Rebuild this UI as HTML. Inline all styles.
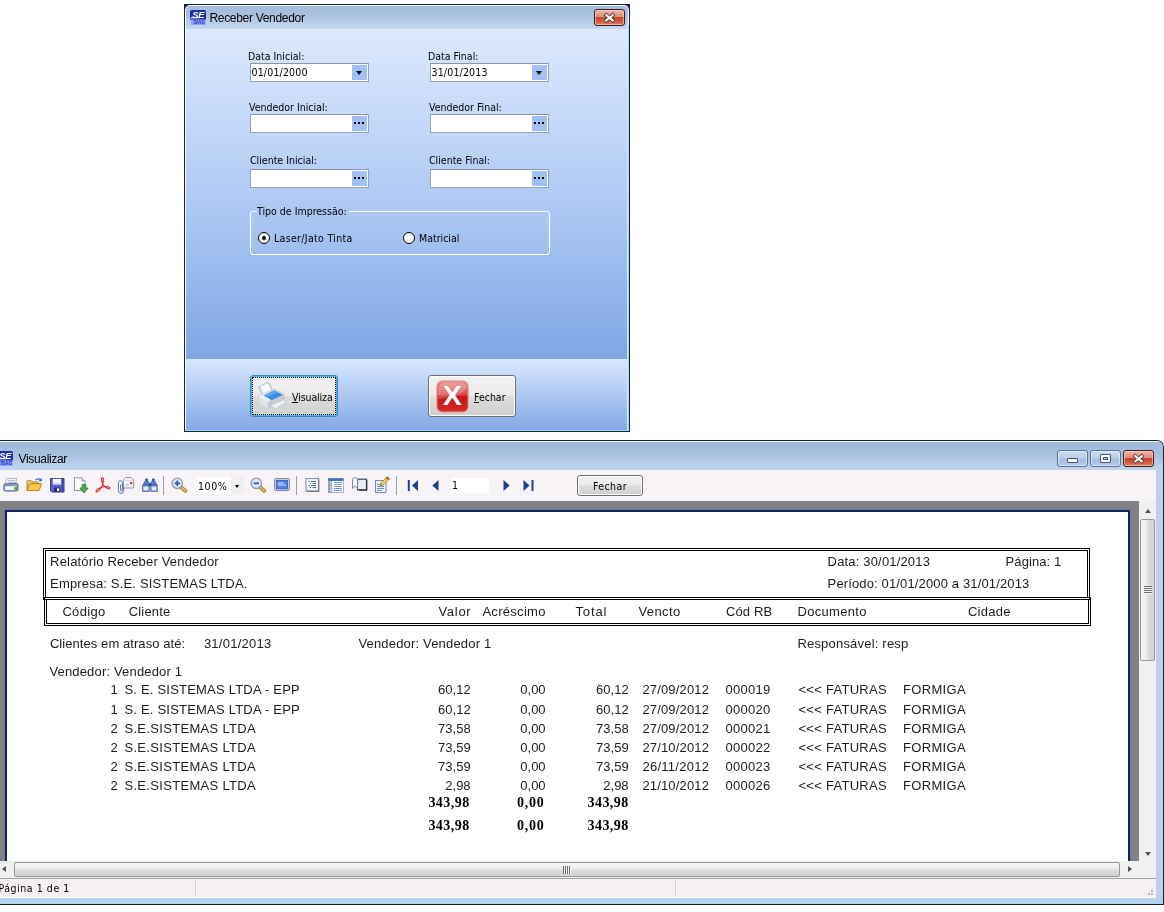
<!DOCTYPE html>
<html lang="pt-BR">
<head>
<meta charset="utf-8">
<title>Receber Vendedor</title>
<style>
*{box-sizing:border-box;margin:0;padding:0}
html,body{width:1164px;height:912px;overflow:hidden;background:#fff}
body{position:relative;font-family:"DejaVu Sans Condensed","Liberation Sans",sans-serif;font-size:10.5px;color:#000}
.abs{position:absolute}
.t{position:absolute;white-space:pre;line-height:1}
/* ---------- dialog ---------- */
#dlg{position:absolute;left:184px;top:4px;width:446px;height:428px;background:#19212b}
#dlg .fr{position:absolute;left:1px;top:1px;width:444px;height:426px;border-radius:5px 5px 0 0;overflow:hidden;background:#f4f9fe}
#dlg .title{position:absolute;left:1px;top:1px;width:442px;height:23px;border-radius:4px 4px 0 0;background:linear-gradient(#a3bcdb 0%,#a9c1df 40%,#b9cfe9 75%,#c4d7ee 100%)}
#dlg .title .cap{left:23.400px;top:6px;font-family:"Liberation Sans",sans-serif;font-size:12px;letter-spacing:-.3px;color:#000}
#dlg .client{position:absolute;left:1px;top:24px;width:441px;height:330px;background:linear-gradient(#dce9fd 0%,#b1cbf5 50%,#80a6e5 100%)}
#dlg .foot{position:absolute;left:1px;top:354px;width:441px;height:71px;background:linear-gradient(#d9e8fd 0%,#84a9e6 100%)}
#dlg .rline{position:absolute;left:442px;top:20px;width:2px;height:406px;background:linear-gradient(90deg,#cfe7f8 50%,#9fdbf4 50%)}
#dlg .bline{position:absolute;left:0;top:425px;width:444px;height:1px;background:#9bdcf5}
.lbl{position:absolute;white-space:pre;line-height:13px;height:13px}
.fld{position:absolute;width:119px;height:19px;background:#fff;border:1px solid #98a1b3;border-top-color:#8c95a7}
.fld .btn{position:absolute;right:1px;top:1px;width:15px;height:15px;background:#a1c0f5}
.fld .val{position:absolute;left:.5px;top:2px;line-height:13px;white-space:pre;letter-spacing:.17px}
.dots i{position:absolute;top:6px;width:2px;height:2px;background:#000}
.arrow{position:absolute;left:4px;top:6px;width:0;height:0;border-left:3.500px solid transparent;border-right:3.500px solid transparent;border-top:4px solid #000}
.radio{position:absolute;width:12px;height:12px;border-radius:50%;background:#fff;border:1px solid #000}
.radio.on:after{content:"";position:absolute;left:3px;top:3px;width:4px;height:4px;border-radius:50%;background:#000}
.bbtn{position:absolute;top:371px;width:88px;height:42px;border:1px solid #707070;border-radius:3px;background:linear-gradient(#f2f2f2 0%,#ebebeb 48%,#dddddd 52%,#cfcfcf 100%);box-shadow:inset 0 0 0 1px #fcfcfc}
/* ---------- viewer window ---------- */
#win{position:absolute;left:-8px;top:440px;width:1172px;height:465px;background:#19212b;border-radius:7px 7px 0 0}
#win .fr{position:absolute;left:1px;top:1px;width:1170px;height:463px;border-radius:6px 6px 0 0;overflow:hidden;background:#b9d1ef}
#win .title{position:absolute;left:0;top:0;width:1170px;height:29px;border-top:1px solid #eef5fc;background:linear-gradient(#9fb9d9 0%,#a5bfdd 40%,#b6cdea 75%,#bfd4ef 100%)}
#win .cap{left:25.600px;top:11px;font-family:"Liberation Sans",sans-serif;font-size:12px;letter-spacing:-.35px}
.cbtn{position:absolute;top:8px;width:31px;height:17px;border:1px solid #5b7494;border-radius:3px;background:linear-gradient(#c9daef 0%,#bccfe8 48%,#a5bedf 52%,#b3c9e6 100%);box-shadow:inset 0 0 0 1px rgba(255,255,255,.5)}
#tb{position:absolute;left:7px;top:29px;width:1156px;height:31px;background:#f7f3f7}
#pv{position:absolute;left:7px;top:60px;width:1139px;height:360px;background:#828286}
#page{position:absolute;left:5px;top:9px;width:1125px;height:360px;border:2px solid #14235a;border-bottom:0;background:#fff;box-shadow:0 0 0 1px #6f7d9e}
#vs{position:absolute;left:1146px;top:60px;width:17px;height:360px;background:#f1f0f1}
#hs{position:absolute;left:7px;top:420px;width:1156px;height:18px;background:#f1f0f1}
#sb{position:absolute;left:7px;top:437px;width:1156px;height:20px;background:#f6f0f1;border-top:1px solid #a3a3a6;border-bottom:1px solid #fcfbfd}
.thumb{position:absolute;border:1px solid #979797;border-radius:2px}
#page,#dlg,.lbl,.fld,.bbtn,#tb,#sb,.title{will-change:transform}
.rp{font-family:"Liberation Sans",sans-serif;font-size:13px;color:#1c1c1c}
.rp .t{line-height:15px}
.b{font-family:"Liberation Serif",serif;font-weight:bold;font-size:14px;color:#000}
</style>
</head>
<body>

<!-- ================= Dialog: Receber Vendedor ================= -->
<div id="dlg"><div class="fr">
  <div class="title">
    <svg class="abs" style="left:4px;top:4px" width="16" height="15" viewBox="0 0 16 15"><rect x="0" y="0" width="16" height="10" rx="1.500" fill="#1c2fa3"/><rect x="1" y="9.500" width="14.500" height="5.500" fill="#8fa2f2"/><text x="8.200" y="7.600" font-family="Liberation Sans,sans-serif" font-weight="bold" font-style="italic" font-size="9.500" fill="#fff" text-anchor="middle" letter-spacing="-.5">SE</text><rect x=".5" y="7.300" width="9" height="1" fill="#fff"/><text x="9.300" y="14" font-family="Liberation Sans,sans-serif" font-weight="bold" font-size="4.800" fill="#2333cc" text-anchor="middle">SIAG</text></svg>
    <span class="t cap">Receber Vendedor</span>
    <div class="abs" id="dclose" style="left:408px;top:3px;width:31px;height:17px;border:1px solid #3d1c22;border-radius:3px;background:linear-gradient(#efb3a4 0%,#e08c7b 46%,#c6452b 50%,#cf5a40 75%,#dd8068 100%);box-shadow:inset 0 0 0 1px rgba(255,225,215,.55)">
      <svg class="abs" style="left:8px;top:2px" width="13" height="11" viewBox="0 0 13 11"><path d="M3.300 3.200 L9.700 8.300 M9.700 3.200 L3.300 8.300" stroke="#4a3a3e" stroke-width="3.800" stroke-linecap="square"/><path d="M3.300 3.200 L9.700 8.300 M9.700 3.200 L3.300 8.300" stroke="#fff" stroke-width="2.200" stroke-linecap="square"/></svg>
    </div>
  </div>
  <div class="client"></div>
  <div class="foot"></div>
  <div class="rline"></div>
  <div class="bline"></div>
</div></div>

<!-- dialog controls in page coordinates -->
<span class="lbl" style="left:248px;top:50px">Data Inicial:</span>
<span class="lbl" style="left:428px;top:50px">Data Final:</span>
<div class="fld" style="left:250px;top:63px"><span class="val">01/01/2000</span><div class="btn"><div class="arrow"></div></div></div>
<div class="fld" style="left:430px;top:63px"><span class="val">31/01/2013</span><div class="btn"><div class="arrow"></div></div></div>

<span class="lbl" style="left:249px;top:101px">Vendedor Inicial:</span>
<span class="lbl" style="left:429px;top:101px">Vendedor Final:</span>
<div class="fld" style="left:250px;top:114px"><div class="btn dots"><i style="left:2px"></i><i style="left:6px"></i><i style="left:10px"></i></div></div>
<div class="fld" style="left:430px;top:114px"><div class="btn dots"><i style="left:2px"></i><i style="left:6px"></i><i style="left:10px"></i></div></div>

<span class="lbl" style="left:250px;top:154px">Cliente Inicial:</span>
<span class="lbl" style="left:429px;top:154px">Cliente Final:</span>
<div class="fld" style="left:250px;top:169px"><div class="btn dots"><i style="left:2px"></i><i style="left:6px"></i><i style="left:10px"></i></div></div>
<div class="fld" style="left:430px;top:169px"><div class="btn dots"><i style="left:2px"></i><i style="left:6px"></i><i style="left:10px"></i></div></div>

<div class="abs" style="left:250px;top:211px;width:300px;height:44px;border:1px solid #fff;border-radius:3px;clip-path:polygon(0 0,6.500px 0,6.500px 3px,99px 3px,99px 0,100% 0,100% 100%,0 100%)"></div>
<span class="lbl" id="grplbl" style="left:257px;top:205px">Tipo de Impressão:</span>
<div class="radio on" style="left:258px;top:232px"></div>
<span class="lbl" style="left:274px;top:232px;letter-spacing:.33px">Laser/Jato Tinta</span>
<div class="radio" style="left:403px;top:232px"></div>
<span class="lbl" style="left:419px;top:232px">Matricial</span>

<div class="bbtn" id="bvis" style="left:250px;top:375px;border-color:#3c86b8;box-shadow:inset 0 0 0 1px #46b4e6">
  <div class="abs" style="left:1px;top:1px;right:1px;bottom:1px;border:1px dotted #000"></div>
  <svg class="abs" style="left:5px;top:5px" width="32" height="30" viewBox="0 0 32 30"><path d="M2.500 6.200L12 1l2 2 2.500 7-9.500 4.500z" fill="#d5d9e0" stroke="#a9afba" stroke-width=".6"/><path d="M4 5.600L12.300 2l3.300 7.600-8.800 3.600z" fill="#f8f9fb" stroke="#c3c8d0" stroke-width=".5"/><path d="M2.700 15.500l4.700-3L18 8l10 5 .4 5-16.600 9.400-8.700-4.800z" fill="#f1f3f6" stroke="#b4bac5" stroke-width=".7"/><path d="M2.700 15.500l9.100 5v6.900l-8.700-4.800z" fill="#e2e5ea"/><path d="M11.800 20.500l16.400-7.300.2 4.800-16.600 9.400z" fill="#c6cbd4"/><path d="M7.600 14.400L18 9.200l9 4.600-11.400 5.400z" fill="#3f8de0"/><path d="M7.600 14.400L18 9.200l4 2-11 5.200z" fill="#5aa4ee"/><path d="M14.900 24.200l11.900-5.100 3.900 1.900-11.400 6.800z" fill="#eef0f3" stroke="#b0b6c0" stroke-width=".5"/></svg>
  <span class="lbl" style="left:41px;top:15px;letter-spacing:-.1px"><u>V</u>isualiza</span>
</div>
<div class="bbtn" id="bfec" style="left:428px;top:375px">
  <svg class="abs" style="left:7px;top:4px" width="33" height="33" viewBox="0 0 33 33"><defs><linearGradient id="rg" x1="0" y1="0" x2="0" y2="1"><stop offset="0" stop-color="#e98c8c"/><stop offset=".45" stop-color="#d64545"/><stop offset=".5" stop-color="#c61717"/><stop offset="1" stop-color="#d42a2a"/></linearGradient></defs><rect x=".8" y=".8" width="31.400" height="31.400" rx="5.500" fill="url(#rg)" stroke="#e9a3a3" stroke-width="1.200"/><path d="M2 14C2 6 4 2.500 9 2.500h15c4 0 6 2 6.500 6C24 16 12 18 2 19z" fill="#fff" opacity=".22"/><text x="16.200" y="25.400" font-family="Liberation Sans,sans-serif" font-weight="bold" font-size="28.500" fill="#fff" text-anchor="middle">X</text></svg>
  <span class="lbl" style="left:45px;top:15px"><u>F</u>echar</span>
</div>

<!-- ================= Window: Visualizar ================= -->
<div id="win"><div class="fr">
  <div class="title">
    <svg class="abs" style="left:4px;top:9px" width="16" height="15" viewBox="0 0 16 15"><rect x="0" y="0" width="16" height="10" rx="1.500" fill="#1c2fa3"/><rect x="1" y="9.500" width="14.500" height="5.500" fill="#8fa2f2"/><text x="8.200" y="7.600" font-family="Liberation Sans,sans-serif" font-weight="bold" font-style="italic" font-size="9.500" fill="#fff" text-anchor="middle" letter-spacing="-.5">SE</text><rect x=".5" y="7.300" width="9" height="1" fill="#fff"/><text x="9.300" y="14" font-family="Liberation Sans,sans-serif" font-weight="bold" font-size="4.800" fill="#2333cc" text-anchor="middle">SIAG</text></svg>
    <span class="t cap">Visualizar</span>
    <div class="cbtn" style="left:1064px"><div class="abs" style="left:9px;top:7px;width:11px;height:5px;background:#fff;border:1px solid #4b5669;border-radius:1px"></div></div>
    <div class="cbtn" style="left:1097px"><div class="abs" style="left:9px;top:3px;width:11px;height:9px;background:#fff;border:1px solid #4b5669;border-radius:1px"><div class="abs" style="left:2px;top:2px;width:5px;height:3px;background:#a9bfde;border:1px solid #4b5669"></div></div></div>
    <div class="cbtn" style="left:1130px;border-color:#3d1c22;background:linear-gradient(#efb3a4 0%,#e08c7b 46%,#c6452b 50%,#cf5a40 75%,#dd8068 100%);box-shadow:inset 0 0 0 1px rgba(255,225,215,.55)"><svg class="abs" style="left:8px;top:2px" width="13" height="11" viewBox="0 0 13 11"><path d="M3.300 3.200 L9.700 8.300 M9.700 3.200 L3.300 8.300" stroke="#4a3a3e" stroke-width="3.800" stroke-linecap="square"/><path d="M3.300 3.200 L9.700 8.300 M9.700 3.200 L3.300 8.300" stroke="#fff" stroke-width="2.200" stroke-linecap="square"/></svg></div>
  </div>
  <div id="tb">
    <!-- print -->
    <svg class="abs" style="left:3px;top:7px" width="16" height="16" viewBox="0 0 16 16"><path d="M3.900 1.300L13.800 1.600 12.300 7.200H2.100z" fill="#fafbfd" stroke="#8c97ad" stroke-width=".7"/><path d="M5.200 3.400h7M4.600 5.200h7" stroke="#9aa5ba" stroke-width=".8"/><path d="M.8 8.300C.8 7.400 1.400 7 2.300 6.900L13 6.200c1.200-.1 2 .5 2 1.600v4.700c0 1-.6 1.600-1.600 1.600H2.200c-.9 0-1.400-.5-1.400-1.400z" fill="#8a9fc6" stroke="#3f5580" stroke-width=".8"/><rect x="1.600" y="8.800" width="12.600" height="4.700" rx=".8" fill="#f1f4fb" stroke="#5b7099" stroke-width=".6"/><rect x="11.300" y="10.100" width="2.700" height="2.700" fill="#1fb32a"/></svg>
    <!-- open -->
    <svg class="abs" style="left:26px;top:7px" width="17" height="16" viewBox="0 0 17 16"><path d="M1 13.500V4.500c0-.5.300-.8.800-.8h3.400l1.200 1.300h5.100c.5 0 .8.300.8.800v1.700" fill="#f3d27a" stroke="#a07a1c" stroke-width=".9"/><path d="M1 13.500l2.300-6.300c.1-.4.400-.6.800-.6h10.700c.5 0 .7.300.6.700l-2 5.600c-.1.400-.4.600-.8.600z" fill="#f7c64a" stroke="#a07a1c" stroke-width=".9"/><path d="M9.500 3.200c1.500-1.800 3.800-1.900 5.200-.2" fill="none" stroke="#3b62b8" stroke-width="1.200"/><path d="M15.800.8v3.400h-3.300z" fill="#3b62b8"/></svg>
    <!-- save -->
    <svg class="abs" style="left:50px;top:8px" width="15" height="15" viewBox="0 0 15 15"><path d="M.5.500h13.500v13.500H1.800L.5 12.700z" fill="#5a61c6" stroke="#333a9a" stroke-width="1"/><path d="M12.500 1v12.500" stroke="#3a4098" stroke-width="1.500"/><rect x="2.800" y=".8" width="8.400" height="5.700" fill="#f4f6fd"/><path d="M2.800 5.500h8.400" stroke="#cfd5f2" stroke-width="1.500"/><rect x="4.500" y="9.500" width="5.200" height="4.300" fill="#1e2158"/><rect x="6.900" y="10.300" width="2.200" height="2.800" fill="#eef0fb"/></svg>
    <!-- export -->
    <svg class="abs" style="left:73px;top:7px" width="16" height="17" viewBox="0 0 16 17"><path d="M1.500.800h7.500l3 3v9.700H1.500z" fill="#fbfcfe" stroke="#7f8b9c" stroke-width=".9"/><path d="M9 .8v3h3" fill="#dfe5ee" stroke="#7f8b9c" stroke-width=".8"/><path d="M9.200 7.500h3.600v3.500h2.400l-4.200 5-4.200-5h2.400z" fill="#4fb04a" stroke="#2a7a2a" stroke-width=".8"/></svg>
    <!-- pdf -->
    <svg class="abs" style="left:95px;top:7px" width="16" height="16" viewBox="0 0 16 16"><path d="M1.200 14.600c-.9-1.500 3.400-4.300 7.600-4.900 3.300-.5 6.300.3 6 1.600-.3 1.200-3.600.300-6.200-3.100C6.300 5.200 6 1.300 7.300.9c1.400-.4 1.600 3 .1 7.200-1.700 4.600-5.300 7.900-6.200 6.500z" fill="none" stroke="#df2a2a" stroke-width="1.150" stroke-linejoin="round"/></svg>
    <!-- attach / mail -->
    <svg class="abs" style="left:117px;top:6px" width="18" height="18" viewBox="0 0 18 18"><path d="M6.500 4.200l1-1.800c.3-.6.800-.9 1.500-.9h4.500c.7 0 1.200.3 1.600.9l1.500 2.200v7.400H6.500z" fill="#f8f9fc" stroke="#7f8ca8" stroke-width=".9"/><path d="M8 4.600h7.500" stroke="#c5ccda" stroke-width=".8"/><rect x="13" y="6" width="2.400" height="2.200" fill="#d9362c"/><path d="M9 8.200h2.600M9 9.800h1.600" stroke="#8c98b2" stroke-width=".8"/><path d="M6.600 8.500v6.200a2.600 2.600 0 0 1-5.200 0V6.700a2 2 0 0 1 4 0v7.300a.9.900 0 0 1-1.800 0V8.500" fill="none" stroke="#5d76a8" stroke-width="1"/></svg>
    <!-- find -->
    <svg class="abs" style="left:142px;top:8px" width="16" height="14" viewBox="0 0 16 14"><rect x="3.300" y=".4" width="2.500" height="3.200" rx=".8" fill="#2f4f9f"/><rect x="10.100" y=".4" width="2.500" height="3.200" rx=".8" fill="#2f4f9f"/><path d="M2.600 3.400h3.900l.9 3.800H1.100zM9.400 3.400h3.900l1.500 3.800H8.500z" fill="#5a80d0" stroke="#27469b" stroke-width=".6"/><rect x=".8" y="7.200" width="6.200" height="6" fill="#e2eafa" stroke="#27469b" stroke-width="1"/><rect x="8.900" y="7.200" width="6.200" height="6" fill="#e2eafa" stroke="#27469b" stroke-width="1"/><path d="M1.300 8.200h5.200M9.400 8.200h5.200" stroke="#7d9ade" stroke-width="1"/><rect x="7" y="5" width="1.900" height="3.400" fill="#27469b"/></svg>
    <div class="abs" style="left:163px;top:6px;width:1px;height:19px;background:#9e9ea4"></div>
    <!-- zoom in -->
    <svg class="abs" style="left:171px;top:7px" width="17" height="16" viewBox="0 0 17 16"><path d="M9.800 9.800l4.600 4" stroke="#8a6a22" stroke-width="3.600" stroke-linecap="round"/><path d="M9.800 9.800l4.600 4" stroke="#e9b84c" stroke-width="2.200" stroke-linecap="round"/><circle cx="6.300" cy="6.300" r="5.200" fill="#dbe9fb" stroke="#8d98aa" stroke-width="1.300"/><path d="M3.600 6.300h5.400M6.300 3.600v5.400" stroke="#2f56b0" stroke-width="1.700"/></svg>
    <!-- zoom combo -->
    <div class="abs" style="left:197px;top:7px;width:47px;height:17px;background:#fff"></div>
    <div class="abs" style="left:231px;top:7px;width:13px;height:17px;background:#f1eef2"></div>
    <span class="t" style="left:198px;top:10px;font-size:10.500px;line-height:13px;letter-spacing:.6px">100%</span>
    <div class="abs" style="left:235px;top:15px;width:0;height:0;border-left:2.500px solid transparent;border-right:2.500px solid transparent;border-top:3px solid #000"></div>
    <!-- zoom out -->
    <svg class="abs" style="left:250px;top:7px" width="17" height="16" viewBox="0 0 17 16"><path d="M9.800 9.800l4.600 4" stroke="#8a6a22" stroke-width="3.600" stroke-linecap="round"/><path d="M9.800 9.800l4.600 4" stroke="#e9b84c" stroke-width="2.200" stroke-linecap="round"/><circle cx="6.300" cy="6.300" r="5.200" fill="#dbe9fb" stroke="#8d98aa" stroke-width="1.300"/><path d="M3.600 6.300h5.400" stroke="#2f56b0" stroke-width="1.700"/></svg>
    <!-- full screen -->
    <svg class="abs" style="left:274px;top:8px" width="16" height="14" viewBox="0 0 16 14"><rect x=".6" y=".6" width="14.800" height="12" rx="1.200" fill="#e6ecf7" stroke="#6f7f9e" stroke-width="1"/><rect x="2.300" y="2.300" width="11.400" height="8.600" fill="#4f7fe0" stroke="#2d55b4" stroke-width=".8"/><path d="M3.800 5h6M3.800 7h8" stroke="#dfe9ff" stroke-width="1"/></svg>
    <div class="abs" style="left:296px;top:6px;width:1px;height:19px;background:#9e9ea4"></div>
    <!-- outline -->
    <svg class="abs" style="left:305px;top:8px" width="15" height="14" viewBox="0 0 15 14"><rect x="1" y=".6" width="12.500" height="12.300" fill="#f6f8fc" stroke="#7c8899" stroke-width="1"/><path d="M13.900 1.500v12h-12" fill="none" stroke="#5d6675" stroke-width=".8"/><path d="M6 3.500h5M7.500 5.500h3.500M6 7.500h5M7.500 9.500h3.500" stroke="#4b66a8" stroke-width="1"/><path d="M3.500 3.500h1.200M5 5.500h1.200M3.500 7.500h1.200M5 9.500h1.200" stroke="#4b66a8" stroke-width="1"/></svg>
    <!-- thumbnails -->
    <svg class="abs" style="left:328px;top:8px" width="16" height="15" viewBox="0 0 16 15"><rect x=".6" y=".6" width="14.600" height="13.600" fill="#f4f7fc" stroke="#6d7e9f" stroke-width="1"/><rect x=".6" y=".6" width="14.600" height="2.400" fill="#3f6fd6"/><rect x=".6" y="3" width="3.800" height="11.200" fill="#b9c7e4"/><rect x="1.400" y="4.200" width="2.300" height="2.300" fill="#fff" stroke="#5a6c90" stroke-width=".5"/><rect x="1.400" y="7.600" width="2.300" height="2.300" fill="#fff" stroke="#5a6c90" stroke-width=".5"/><rect x="1.400" y="11" width="2.300" height="2.300" fill="#fff" stroke="#5a6c90" stroke-width=".5"/><rect x="4.400" y="3" width="10.800" height="11.200" fill="#fbfcff"/><path d="M6 4.500h8M6 6.500h8M6 8.500h8M6 10.500h8M6 12.500h8" stroke="#7f93bd" stroke-width="1" shape-rendering="crispEdges"/></svg>
    <!-- bookmark page -->
    <svg class="abs" style="left:351px;top:7px" width="17" height="15" viewBox="0 0 17 15"><rect x="6.500" y="2.200" width="9" height="10.600" fill="#e9eefa" stroke="#3c4558" stroke-width="1.200"/><path d="M15.800 3v10.200H8" fill="none" stroke="#222a3a" stroke-width="1"/><path d="M1.500 11.500V2.600c0-1 .6-1.600 1.600-1.600h1.800c1 0 1.600.6 1.600 1.600v8.900L4 8.800z" fill="#f9fbfe" stroke="#7b8798" stroke-width="1"/></svg>
    <!-- edit -->
    <svg class="abs" style="left:374px;top:6px" width="17" height="18" viewBox="0 0 17 18"><path d="M1.500 4.500h9l1.500 1.500v10.500H1.500z" fill="#f1f6fe" stroke="#6f86b8" stroke-width="1"/><path d="M3 8.500h7M3 10.500h7M3 12.500h7M3 14.500h5" stroke="#6f8fd0" stroke-width="1" shape-rendering="crispEdges"/><path d="M6.200 9.800l.5-2.600 6.600-6.400 2.100 2.100-6.600 6.400z" fill="#f2cf57" stroke="#9a7a22" stroke-width=".7"/><path d="M13.300.8l2.100 2.100-1.200 1.200-2.100-2.100z" fill="#e36a6a" stroke="#a33" stroke-width=".6"/><path d="M6.200 9.800l.5-2.600 2.100 2.100z" fill="#f5e3c0" stroke="#6b5a34" stroke-width=".5"/></svg>
    <div class="abs" style="left:396px;top:6px;width:1px;height:19px;background:#9e9ea4"></div>
    <!-- navigation -->
    <svg class="abs" style="left:407px;top:10px" width="12" height="11" viewBox="0 0 12 11"><rect x=".8" y="0" width="2" height="11" fill="#1f3f8f"/><path d="M11 0v11L5 5.500z" fill="#1f3f8f"/></svg>
    <svg class="abs" style="left:432px;top:10px" width="7" height="11" viewBox="0 0 7 11"><path d="M6.500 0v11L.3 5.500z" fill="#1f3f8f"/></svg>
    <div class="abs" style="left:451px;top:8px;width:38px;height:15px;background:#fff"></div>
    <span class="t" style="left:452px;top:9px;font-size:10.500px;line-height:13px">1</span>
    <svg class="abs" style="left:503px;top:10px" width="7" height="11" viewBox="0 0 7 11"><path d="M.5 0v11l6.200-5.500z" fill="#1f3f8f"/></svg>
    <svg class="abs" style="left:523px;top:10px" width="12" height="11" viewBox="0 0 12 11"><path d="M.5 0v11l6-5.500z" fill="#1f3f8f"/><rect x="8.500" y="0" width="2" height="11" fill="#1f3f8f"/></svg>
    <!-- close button -->
    <div class="abs" style="left:577px;top:5px;width:66px;height:21px;border:1px solid #707070;border-radius:3px;background:linear-gradient(#f2f2f2 0%,#ebebeb 48%,#dddddd 52%,#cfcfcf 100%);box-shadow:inset 0 0 0 1px #fcfcfc"><span class="t" style="left:15px;top:4px;font-size:10.500px;line-height:13px;letter-spacing:.4px">Fechar</span></div>
  </div>
  <div id="pv"><div id="page" class="rp">
<div class="abs" style="left:36px;top:36px;width:1047px;height:52px;border:3px double #000"></div>
<div class="abs" style="left:37px;top:85px;width:1047px;height:29px;border:3px double #000"></div>
<span class="t" style="left:43.1px;letter-spacing:0.18px;top:42.0px">Relatório Receber Vendedor</span>
<span class="t" style="left:43.1px;letter-spacing:0.17px;top:63.5px">Empresa: S.E. SISTEMAS LTDA.</span>
<span class="t" style="left:820.6px;letter-spacing:0.17px;top:42.0px">Data: 30/01/2013</span>
<span class="t" style="left:998.6px;letter-spacing:0.08px;top:42.0px">Página: 1</span>
<span class="t" style="left:820.6px;letter-spacing:0.14px;top:63.5px">Período: 01/01/2000 a 31/01/2013</span>
<span class="t" style="left:55.4px;letter-spacing:0.32px;top:92.0px">Código</span>
<span class="t" style="left:121.7px;letter-spacing:0.18px;top:92.0px">Cliente</span>
<span class="t" style="left:431.4px;letter-spacing:0.73px;top:92.0px">Valor</span>
<span class="t" style="left:475.4px;letter-spacing:0.3px;top:92.0px">Acréscimo</span>
<span class="t" style="left:568.4px;letter-spacing:0.9px;top:92.0px">Total</span>
<span class="t" style="left:631.4px;letter-spacing:0.41px;top:92.0px">Vencto</span>
<span class="t" style="left:718.9px;letter-spacing:0.15px;top:92.0px">Cód RB</span>
<span class="t" style="left:790.6px;letter-spacing:0.29px;top:92.0px">Documento</span>
<span class="t" style="left:960.9px;letter-spacing:0.27px;top:92.0px">Cidade</span>
<span class="t" style="left:42.9px;letter-spacing:0.07px;top:123.5px">Clientes em atraso até:</span>
<span class="t" style="left:196.9px;letter-spacing:0.25px;top:123.5px">31/01/2013</span>
<span class="t" style="left:351.4px;letter-spacing:0.18px;top:123.5px">Vendedor: Vendedor 1</span>
<span class="t" style="left:790.4px;letter-spacing:0.2px;top:123.5px">Responsável: resp</span>
<span class="t" style="left:42.4px;letter-spacing:0.17px;top:151.5px">Vendedor: Vendedor 1</span>
<span class="t" style="left:103.4px;top:170.2px">1</span>
<span class="t" style="left:117.4px;letter-spacing:0.21px;top:170.2px">S. E. SISTEMAS LTDA - EPP</span>
<span class="t" style="left:431.1px;top:170.2px">60,12</span>
<span class="t" style="left:513.3px;top:170.2px">0,00</span>
<span class="t" style="left:589.1px;top:170.2px">60,12</span>
<span class="t" style="left:635.4px;letter-spacing:0.16px;top:170.2px">27/09/2012</span>
<span class="t" style="left:718.4px;letter-spacing:0.28px;top:170.2px">000019</span>
<span class="t" style="left:791.4px;letter-spacing:0.29px;top:170.2px">&lt;&lt;&lt; FATURAS</span>
<span class="t" style="left:895.9px;letter-spacing:0.35px;top:170.2px">FORMIGA</span>
<span class="t" style="left:103.4px;top:189.5px">1</span>
<span class="t" style="left:117.4px;letter-spacing:0.21px;top:189.5px">S. E. SISTEMAS LTDA - EPP</span>
<span class="t" style="left:431.1px;top:189.5px">60,12</span>
<span class="t" style="left:513.3px;top:189.5px">0,00</span>
<span class="t" style="left:589.1px;top:189.5px">60,12</span>
<span class="t" style="left:635.4px;letter-spacing:0.16px;top:189.5px">27/09/2012</span>
<span class="t" style="left:718.4px;letter-spacing:0.28px;top:189.5px">000020</span>
<span class="t" style="left:791.4px;letter-spacing:0.29px;top:189.5px">&lt;&lt;&lt; FATURAS</span>
<span class="t" style="left:895.9px;letter-spacing:0.35px;top:189.5px">FORMIGA</span>
<span class="t" style="left:103.4px;top:209.0px">2</span>
<span class="t" style="left:117.4px;letter-spacing:0.32px;top:209.0px">S.E.SISTEMAS LTDA</span>
<span class="t" style="left:431.1px;top:209.0px">73,58</span>
<span class="t" style="left:513.3px;top:209.0px">0,00</span>
<span class="t" style="left:589.1px;top:209.0px">73,58</span>
<span class="t" style="left:635.4px;letter-spacing:0.16px;top:209.0px">27/09/2012</span>
<span class="t" style="left:718.4px;letter-spacing:0.28px;top:209.0px">000021</span>
<span class="t" style="left:791.4px;letter-spacing:0.29px;top:209.0px">&lt;&lt;&lt; FATURAS</span>
<span class="t" style="left:895.9px;letter-spacing:0.35px;top:209.0px">FORMIGA</span>
<span class="t" style="left:103.4px;top:228.0px">2</span>
<span class="t" style="left:117.4px;letter-spacing:0.32px;top:228.0px">S.E.SISTEMAS LTDA</span>
<span class="t" style="left:431.1px;top:228.0px">73,59</span>
<span class="t" style="left:513.3px;top:228.0px">0,00</span>
<span class="t" style="left:589.1px;top:228.0px">73,59</span>
<span class="t" style="left:635.4px;letter-spacing:0.16px;top:228.0px">27/10/2012</span>
<span class="t" style="left:718.4px;letter-spacing:0.28px;top:228.0px">000022</span>
<span class="t" style="left:791.4px;letter-spacing:0.29px;top:228.0px">&lt;&lt;&lt; FATURAS</span>
<span class="t" style="left:895.9px;letter-spacing:0.35px;top:228.0px">FORMIGA</span>
<span class="t" style="left:103.4px;top:247.0px">2</span>
<span class="t" style="left:117.4px;letter-spacing:0.32px;top:247.0px">S.E.SISTEMAS LTDA</span>
<span class="t" style="left:431.1px;top:247.0px">73,59</span>
<span class="t" style="left:513.3px;top:247.0px">0,00</span>
<span class="t" style="left:589.1px;top:247.0px">73,59</span>
<span class="t" style="left:635.4px;letter-spacing:0.27px;top:247.0px">26/11/2012</span>
<span class="t" style="left:718.4px;letter-spacing:0.28px;top:247.0px">000023</span>
<span class="t" style="left:791.4px;letter-spacing:0.29px;top:247.0px">&lt;&lt;&lt; FATURAS</span>
<span class="t" style="left:895.9px;letter-spacing:0.35px;top:247.0px">FORMIGA</span>
<span class="t" style="left:103.4px;top:266.0px">2</span>
<span class="t" style="left:117.4px;letter-spacing:0.32px;top:266.0px">S.E.SISTEMAS LTDA</span>
<span class="t" style="left:438.3px;top:266.0px">2,98</span>
<span class="t" style="left:513.3px;top:266.0px">0,00</span>
<span class="t" style="left:596.3px;top:266.0px">2,98</span>
<span class="t" style="left:635.4px;letter-spacing:0.16px;top:266.0px">21/10/2012</span>
<span class="t" style="left:718.4px;letter-spacing:0.28px;top:266.0px">000026</span>
<span class="t" style="left:791.4px;letter-spacing:0.29px;top:266.0px">&lt;&lt;&lt; FATURAS</span>
<span class="t" style="left:895.9px;letter-spacing:0.35px;top:266.0px">FORMIGA</span>
<span class="t b" style="left:421.4px;letter-spacing:0.46px;top:282.5px">343,98</span>
<span class="t b" style="left:510.1px;letter-spacing:0.68px;top:282.5px">0,00</span>
<span class="t b" style="left:580.6px;letter-spacing:0.41px;top:282.5px">343,98</span>
<span class="t b" style="left:421.4px;letter-spacing:0.46px;top:305.5px">343,98</span>
<span class="t b" style="left:510.1px;letter-spacing:0.68px;top:305.5px">0,00</span>
<span class="t b" style="left:580.6px;letter-spacing:0.41px;top:305.5px">343,98</span>
</div></div>
  <div id="vs">
    <div class="abs" style="left:6px;top:8px;width:0;height:0;border-left:3.500px solid transparent;border-right:3.500px solid transparent;border-bottom:4px solid #505050"></div>
    <div class="thumb" style="left:1px;top:18px;width:15px;height:142px;background:linear-gradient(90deg,#f6f6f6 0%,#ececec 45%,#dcdcdc 55%,#d2d2d2 100%)">
      <div class="abs" style="left:3px;top:66px;width:8px;height:8px;background:repeating-linear-gradient(#6e6e6e 0,#6e6e6e 1px,#f4f4f4 1px,#f4f4f4 2px)"></div>
    </div>
    <div class="abs" style="left:6px;top:351px;width:0;height:0;border-left:3.500px solid transparent;border-right:3.500px solid transparent;border-top:4px solid #505050"></div>
  </div>
  <div id="hs">
    <div class="abs" style="left:2px;top:5px;width:0;height:0;border-top:3.500px solid transparent;border-bottom:3.500px solid transparent;border-right:4px solid #505050"></div>
    <div class="thumb" style="left:14px;top:1px;width:1106px;height:15px;background:linear-gradient(#f6f6f6 0%,#ececec 45%,#dcdcdc 55%,#d2d2d2 100%)">
      <div class="abs" style="left:548px;top:3px;width:8px;height:8px;background:repeating-linear-gradient(90deg,#6e6e6e 0,#6e6e6e 1px,#f4f4f4 1px,#f4f4f4 2px)"></div>
    </div>
    <div class="abs" style="left:1128px;top:5px;width:0;height:0;border-top:3.500px solid transparent;border-bottom:3.500px solid transparent;border-left:4px solid #505050"></div>
  </div>
  <div id="sb"><div class="abs" style="left:-7px;top:24px;width:1170px;height:1px;background:#93dcf4"></div>
    <span class="t" style="left:-1.500px;top:3px;font-size:10.500px;line-height:13px;letter-spacing:.55px">Página 1 de 1</span>
    <div class="abs" style="left:195px;top:2px;width:1px;height:16px;background:#d4d0d2"></div>
    <div class="abs" style="left:675px;top:2px;width:1px;height:16px;background:#d4d0d2"></div>
    <div class="abs" style="left:1145px;top:8px;width:9px;height:9px;background:radial-gradient(circle at 1px 1px,#b8b8c0 0,#b8b8c0 1px,transparent 1.200px) 0 0/3px 3px;clip-path:polygon(100% 0,100% 100%,0 100%)"></div>
  </div>
</div></div>

</body>
</html>
